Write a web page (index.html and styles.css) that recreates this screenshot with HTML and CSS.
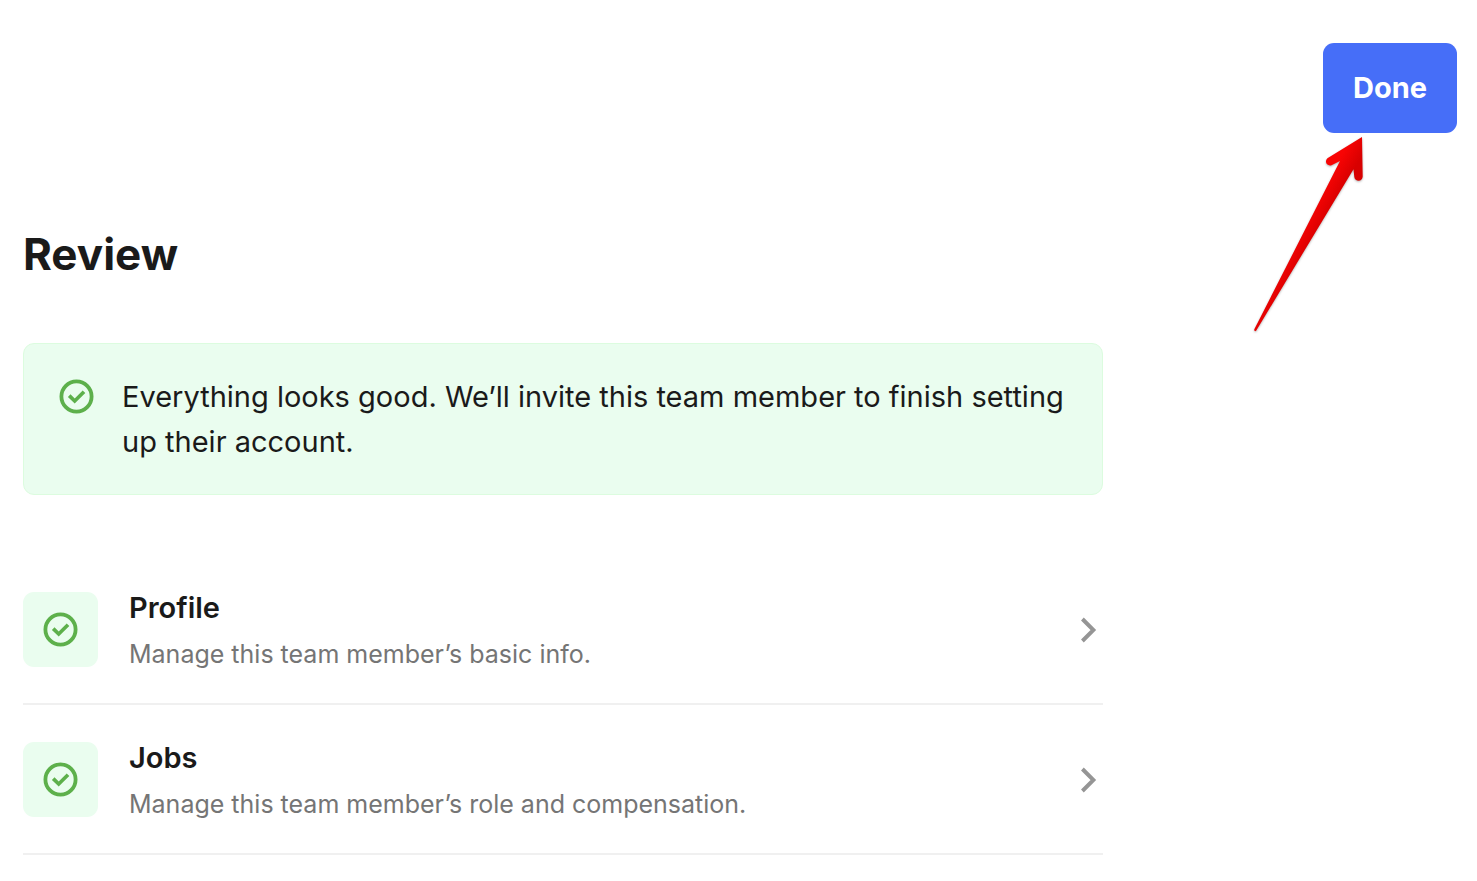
FILE: index.html
```
<!DOCTYPE html>
<html lang="en">
<head>
  <meta charset="UTF-8">
  <meta name="viewport" content="width=device-width, initial-scale=1.0">
  <title>Review team member</title>
  <link rel="stylesheet" href="styles.css">
</head>
<body>
  <svg class="defs" aria-hidden="true">
    <symbol id="check" viewBox="0 0 35 35">
      <circle cx="17.5" cy="17.5" r="15.1" fill="none" stroke="currentColor" stroke-width="3.8" />
      <path d="M10.2 16.6 L15.7 22 L25 12.8" fill="none" stroke="currentColor" stroke-width="3.7" />
    </symbol>
    <symbol id="chevron" viewBox="0 0 18 26">
      <path d="M2.4 2 L13.4 13 L2.4 24" fill="none" stroke="currentColor" stroke-width="3.9" />
    </symbol>
  </svg>

  <header class="topbar">
    <div class="action">
      <button type="button" class="done-button">Done</button>
      <svg class="arrow" viewBox="0 0 120 204" aria-hidden="true">
        <defs>
          <linearGradient id="arrowFill" gradientUnits="userSpaceOnUse" x1="52" y1="92" x2="68" y2="101">
            <stop offset="0" stop-color="#f80404" />
            <stop offset="1" stop-color="#d80000" />
          </linearGradient>
        </defs>
        <path d="M112 4 L77.8 25 C75.4 27 75.6 29.7 77 31.3 C78.6 32.7 80.5 32.7 82 31.9 L90 28 L4.2 196.5 Q4.4 199.3 6.3 197.5 L103.5 36.2 L104.3 44 C104.7 46.5 106.5 47.8 108.5 47.8 C111 47.6 112.5 46 112.7 43.5 Z" />
      </svg>
    </div>
  </header>

  <main class="review">
    <h1>Review</h1>

    <div class="banner" role="status">
      <svg class="check" aria-hidden="true"><use href="#check" /></svg>
      <p>Everything looks good. We’ll invite this team member to finish setting up their account.</p>
    </div>

    <ul class="steps">
      <li>
        <a href="#profile" class="step">
          <span class="tile"><svg class="check" aria-hidden="true"><use href="#check" /></svg></span>
          <span class="step-text">
            <span class="step-title">Profile</span>
            <span class="step-info">Manage this team member’s basic info.</span>
          </span>
          <svg class="chevron" aria-hidden="true"><use href="#chevron" /></svg>
        </a>
      </li>
      <li>
        <a href="#jobs" class="step">
          <span class="tile"><svg class="check" aria-hidden="true"><use href="#check" /></svg></span>
          <span class="step-text">
            <span class="step-title">Jobs</span>
            <span class="step-info">Manage this team member’s role and compensation.</span>
          </span>
          <svg class="chevron" aria-hidden="true"><use href="#chevron" /></svg>
        </a>
      </li>
    </ul>
  </main>
</body>
</html>
```
FILE: styles.css
```
* {
  box-sizing: border-box;
}
body {
  margin: 0;
  background-color: #fff;
  color: #1a1a1a;
  font-family: Inter, "Liberation Sans", sans-serif;
}
.defs {
  display: none;
}
.topbar {
  display: flex;
  justify-content: flex-end;
  padding: 43px 20px 0;
}
.action {
  position: relative;
}
.done-button {
  display: block;
  padding: 22px 30px;
  border: none;
  border-radius: 11px;
  background-color: #466ef8;
  color: #fff;
  font-family: inherit;
  font-size: 29px;
  font-weight: 700;
  line-height: 46px;
  cursor: pointer;
}
.arrow {
  position: absolute;
  top: 100%;
  right: 87px;
  width: 120px;
  height: 204px;
  fill: url(#arrowFill);
  filter: drop-shadow(0 1px 1px rgba(0, 0, 0, 0.3));
  pointer-events: none;
}
.review {
  max-width: 1126px;
  padding: 92px 23px 0;
}
h1 {
  margin: 0 0 60px;
  font-size: 44px;
  font-weight: 700;
  line-height: 58px;
}
.banner {
  display: flex;
  align-items: flex-start;
  gap: 28px;
  padding: 30px 35px;
  border: 1px solid #dcfcdf;
  border-radius: 11px;
  background-color: #eafdef;
}
.banner .check {
  margin-top: 5px;
}
.banner p {
  margin: 0;
  font-size: 29px;
  line-height: 45px;
}
.check {
  flex: none;
  width: 35px;
  height: 35px;
  color: #5db04b;
}
.steps {
  margin: 60px 0 0;
  padding: 0;
  list-style: none;
}
.step {
  display: flex;
  align-items: center;
  gap: 31px;
  padding: 37px 5px 36px 0;
  border-bottom: 2px solid #f0f0f0;
  color: inherit;
  text-decoration: none;
}
.tile {
  display: flex;
  flex: none;
  align-items: center;
  justify-content: center;
  width: 75px;
  height: 75px;
  border-radius: 11px;
  background-color: #eafdef;
}
.step-text {
  display: flex;
  flex: 1;
  flex-direction: column;
  margin: -8px 0 -10px;
}
.step-title {
  font-size: 29px;
  font-weight: 600;
  line-height: 46px;
}
.step-info {
  color: #757575;
  font-size: 25px;
  line-height: 46px;
}
.chevron {
  flex: none;
  width: 18px;
  height: 26px;
  color: #959595;
}
```
